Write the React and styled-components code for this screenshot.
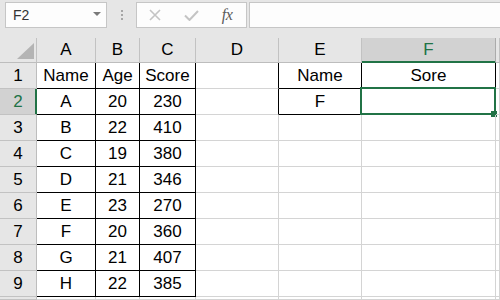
import styled, { createGlobalStyle } from "styled-components";

const GREEN = "#217346";
const GRID = "#d4d4d4";
const HEAD_LINE = "#c2c2c2";

// G only peeks in at the right edge, its letter is out of view
const columns = ["A", "B", "C", "D", "E", "F", ""];

const data = [
  ["Name", "Age", "Score", "", "Name", "Sore", ""],
  ["A", "20", "230", "", "F", "", ""],
  ["B", "22", "410", "", "", "", ""],
  ["C", "19", "380", "", "", "", ""],
  ["D", "21", "346", "", "", "", ""],
  ["E", "23", "270", "", "", "", ""],
  ["F", "20", "360", "", "", "", ""],
  ["G", "21", "407", "", "", "", ""],
  ["H", "22", "385", "", "", "", ""],
  ["", "", "", "", "", "", ""],
];

// which cell edges carry the black table border
const inTable = (r, c) => r >= 0 && r <= 8 && c >= 0 && c <= 2;
const inSmall = (r, c) => r >= 0 && r <= 1 && c >= 4 && c <= 5;
const framed = (r, c) => inTable(r, c) || inSmall(r, c);

function App() {
  return (
    <>
      <GlobalStyle />
      <Toolbar>
        <NameBox>
          <span>F2</span>
          <Caret />
        </NameBox>
        <Dots>
          <i />
          <i />
          <i />
        </Dots>
        <FxButtons>
          <FxSlot>
            <svg width="12" height="12" viewBox="0 0 12 12">
              <path d="M1 1 L11 11 M11 1 L1 11" stroke="#c4c4c4" strokeWidth="1.6" fill="none" />
            </svg>
          </FxSlot>
          <FxSlot>
            <svg width="15" height="11" viewBox="0 0 15 11">
              <path d="M1 5.5 L5.5 10 L14 1" stroke="#c4c4c4" strokeWidth="2" fill="none" />
            </svg>
          </FxSlot>
          <FxSlot>
            <FxText>fx</FxText>
          </FxSlot>
        </FxButtons>
        <FormulaInput />
      </Toolbar>

      <Sheet>
        <Corner>
          <Triangle />
        </Corner>
        {columns.map((col, i) => (
          <ColHeader key={i} $active={col === "F"}>
            {col}
          </ColHeader>
        ))}

        {data.map((row, r) => (
          <Row key={r} r={r} row={row} />
        ))}
      </Sheet>
    </>
  );
}

function Row({ r, row }) {
  return (
    <>
      <RowHeader $active={r === 1}>{r < 9 ? r + 1 : ""}</RowHeader>
      {row.map((value, c) => {
        const right = framed(r, c) || framed(r, c + 1);
        const bottom = framed(r, c) || framed(r + 1, c);
        const selected = r === 1 && c === 5;
        return (
          <Cell key={c} $right={right} $bottom={bottom}>
            {value}
            {selected && (
              <Selection>
                <FillHandle />
              </Selection>
            )}
          </Cell>
        );
      })}
    </>
  );
}

export default App;

const GlobalStyle = createGlobalStyle`
  html, body {
    margin: 0;
    padding: 0;
    background: #ffffff;
    overflow: hidden;
  }
  body {
    font-family: "Liberation Sans", Arial, sans-serif;
    color: #000;
  }
`;

const Toolbar = styled.div`
  display: flex;
  align-items: flex-start;
  height: 38px;
  box-sizing: border-box;
  padding: 2px 0 0 5px;
  background: #e6e6e6;
`;

const NameBox = styled.div`
  width: 102px;
  height: 26px;
  box-sizing: border-box;
  border: 1px solid #c6c6c6;
  background: #fdfdfd;
  display: flex;
  align-items: center;
  justify-content: space-between;
  padding: 0 5px 0 7px;
  font-size: 14px;
  color: #333;
`;

const Caret = styled.div`
  width: 0;
  height: 0;
  border-left: 4px solid transparent;
  border-right: 4px solid transparent;
  border-top: 4px solid #7a7a7a;
  margin-top: -2px;
`;

const Dots = styled.div`
  display: flex;
  flex-direction: column;
  gap: 2px;
  margin: 8px 13px 0 14px;

  i {
    display: block;
    width: 2px;
    height: 2px;
    background: #a6a6a6;
  }
`;

const FxButtons = styled.div`
  width: 111px;
  height: 26px;
  box-sizing: border-box;
  border: 1px solid #c6c6c6;
  background: #fdfdfd;
  display: flex;
  align-items: center;
`;

const FxSlot = styled.div`
  width: 36px;
  display: flex;
  justify-content: center;
  align-items: center;
`;

const FxText = styled.span`
  font-family: "Liberation Serif", "Times New Roman", serif;
  font-style: italic;
  font-size: 16px;
  color: #5a5a5a;
  letter-spacing: -0.5px;
`;

const FormulaInput = styled.div`
  flex: 1;
  height: 26px;
  margin-left: 2px;
  box-sizing: border-box;
  border: 1px solid #c6c6c6;
  border-right: none;
  background: #fdfdfd;
`;

const Sheet = styled.div`
  display: grid;
  grid-template-columns: 37px 59px 44px 56px 83px 83px 134px 1fr;
  grid-template-rows: 25px repeat(9, 26px) 1fr;
  height: calc(100vh - 38px);
  overflow: hidden;
  font-size: 17px;
`;

const HeaderBase = styled.div`
  box-sizing: border-box;
  display: flex;
  align-items: center;
  justify-content: center;
  overflow: hidden;
  background: #e6e6e6;
  border-right: 1px solid ${HEAD_LINE};
  border-bottom: 1px solid #bdbdbd;
`;

const Corner = styled(HeaderBase)`
  justify-content: flex-end;
  align-items: flex-end;
  padding: 0 2px 3px 0;
`;

const Triangle = styled.div`
  width: 17px;
  height: 16px;
  background: #b4b4b4;
  clip-path: polygon(100% 0, 100% 100%, 0 100%);
`;

const ColHeader = styled(HeaderBase)`
  background: ${(p) => (p.$active ? "#d2d2d2" : "#e6e6e6")};
  color: ${(p) => (p.$active ? GREEN : "#000")};
  border-bottom-color: ${(p) => (p.$active ? GREEN : "#bdbdbd")};
  box-shadow: ${(p) => (p.$active ? `inset 0 -1px 0 ${GREEN}` : "none")};
  border-right-color: ${(p) => (p.$active ? "#ababab" : HEAD_LINE)};
`;

const RowHeader = styled(HeaderBase)`
  background: ${(p) => (p.$active ? "#d2d2d2" : "#e6e6e6")};
  color: ${(p) => (p.$active ? GREEN : "#000")};
  border-right-color: ${(p) => (p.$active ? GREEN : "#bdbdbd")};
  border-bottom-color: ${HEAD_LINE};
  box-shadow: ${(p) => (p.$active ? `inset -1px 0 0 ${GREEN}` : "none")};
`;

const Cell = styled.div`
  position: relative;
  box-sizing: border-box;
  display: flex;
  align-items: center;
  justify-content: center;
  white-space: nowrap;
  border-right: 1px solid ${(p) => (p.$right ? "#000" : GRID)};
  border-bottom: 1px solid ${(p) => (p.$bottom ? "#000" : GRID)};
`;

const Selection = styled.div`
  position: absolute;
  top: -2px;
  left: -2px;
  right: -1px;
  bottom: -1px;
  border: 2px solid ${GREEN};
  pointer-events: none;
`;

const FillHandle = styled.div`
  position: absolute;
  right: -3px;
  bottom: -4px;
  width: 6px;
  height: 6px;
  background: ${GREEN};
`;
